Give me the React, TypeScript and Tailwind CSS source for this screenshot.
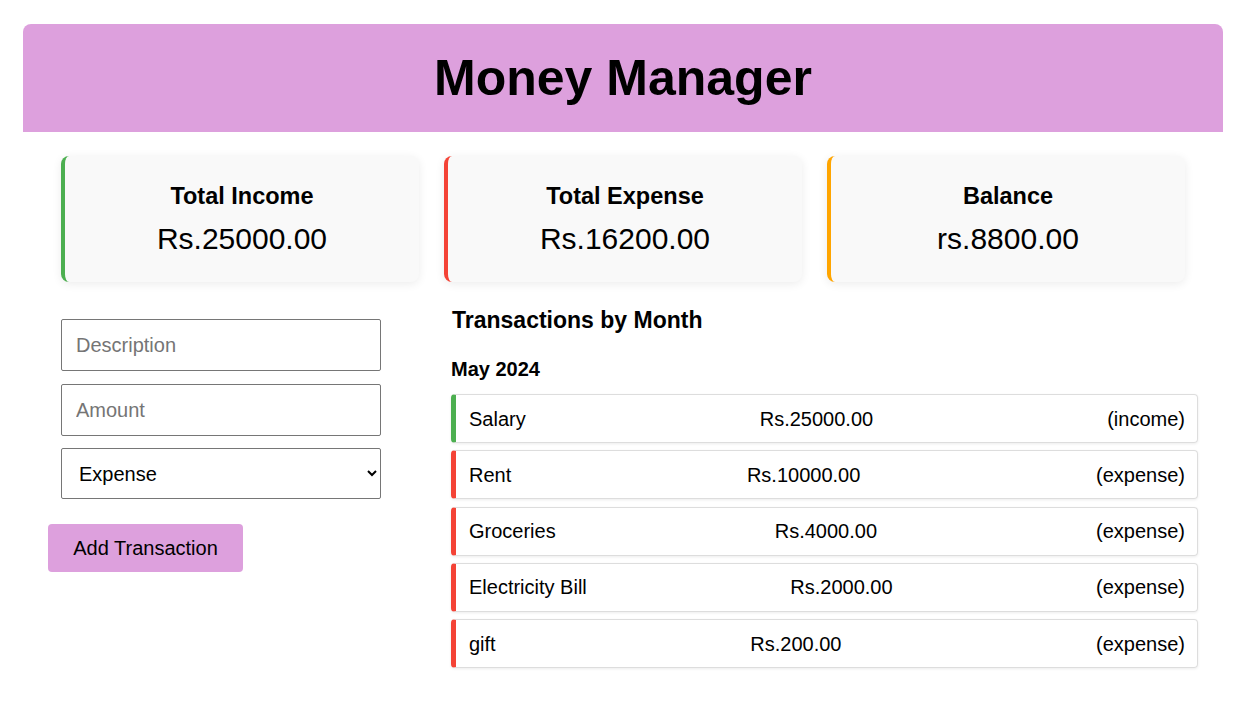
import { useState } from "react";

type Txn = { desc: string; amount: number; type: "income" | "expense" };

export default function App() {
  const [txns] = useState<Txn[]>([
    { desc: "Salary", amount: 25000, type: "income" },
    { desc: "Rent", amount: 10000, type: "expense" },
    { desc: "Groceries", amount: 4000, type: "expense" },
    { desc: "Electricity Bill", amount: 2000, type: "expense" },
    { desc: "gift", amount: 200, type: "expense" },
  ]);

  const cards = [
    { title: "Total Income", value: "Rs.25000.00", border: "border-l-[#4caf50]" },
    { title: "Total Expense", value: "Rs.16200.00", border: "border-l-[#f44336]" },
    { title: "Balance", value: "rs.8800.00", border: "border-l-[#ffa500]" },
  ];

  return (
    <div className="min-h-screen bg-white pt-[24px] font-['Liberation_Sans',Arial,sans-serif] text-black">
      {/* Header */}
      <header className="ml-[23px] flex h-[107.5px] w-[1200px] items-center justify-center rounded-t-lg bg-[#dda0dd]">
        <h1 className="text-[50px] font-bold leading-none">Money Manager</h1>
      </header>

      {/* Summary cards */}
      <div className="ml-[61px] mt-[24.5px] grid w-[1124px] grid-cols-3 gap-[25px]">
        {cards.map((c) => (
          <div
            key={c.title}
            className={`flex h-[126px] flex-col items-center justify-center rounded-lg border-l-4 bg-[#f9f9f9] shadow-[0_2px_10px_rgba(0,0,0,0.08)] ${c.border}`}
          >
            <h3 className="text-[23.5px] font-bold leading-[26px]">{c.title}</h3>
            <p className="mt-[13px] text-[30px] leading-[34px]">{c.value}</p>
          </div>
        ))}
      </div>

      {/* Form + transactions */}
      <div className="ml-[48px] mt-[25px] flex">
        <div className="w-[403px] pt-[12px]">
          <input
            placeholder="Description"
            className="ml-[13px] block h-[52px] w-[320px] rounded-[2px] border border-[#767676] px-[14px] text-[20px] placeholder:text-[#757575]"
          />
          <input
            placeholder="Amount"
            className="ml-[13px] mt-[13px] block h-[52px] w-[320px] rounded-[2px] border border-[#767676] px-[14px] text-[20px] placeholder:text-[#757575]"
          />
          <select
            defaultValue="expense"
            className="ml-[13px] mt-[12px] block h-[51px] w-[320px] rounded-[2px] border border-[#767676] bg-white pl-[13px] pr-[4px] text-[20px]"
          >
            <option value="income">Income</option>
            <option value="expense">Expense</option>
          </select>
          <button className="mt-[25px] h-[48px] w-[195px] rounded-[4px] bg-[#dda0dd] text-[20px]">
            Add Transaction
          </button>
        </div>

        <div className="w-[747px]">
          <h2 className="ml-[1px] text-[23px] font-bold leading-[26px]">Transactions by Month</h2>
          <h4 className="mt-[25px] text-[20px] font-bold leading-[23px]">May 2024</h4>
          <div className="mt-[13px] flex flex-col gap-[7.25px]">
            {txns.map((t) => (
              <div
                key={t.desc}
                className={`flex h-[49px] items-center justify-between rounded-[4px] border border-[#ddd] border-l-[5px] pl-[13px] pr-[12px] text-[20px] shadow-[0_1px_3px_rgba(0,0,0,0.08)] ${
                  t.type === "income" ? "border-l-[#4caf50]" : "border-l-[#f44336]"
                }`}
              >
                <span>{t.desc}</span>
                <span>Rs.{t.amount.toFixed(2)}</span>
                <span>({t.type})</span>
              </div>
            ))}
          </div>
        </div>
      </div>
    </div>
  );
}
